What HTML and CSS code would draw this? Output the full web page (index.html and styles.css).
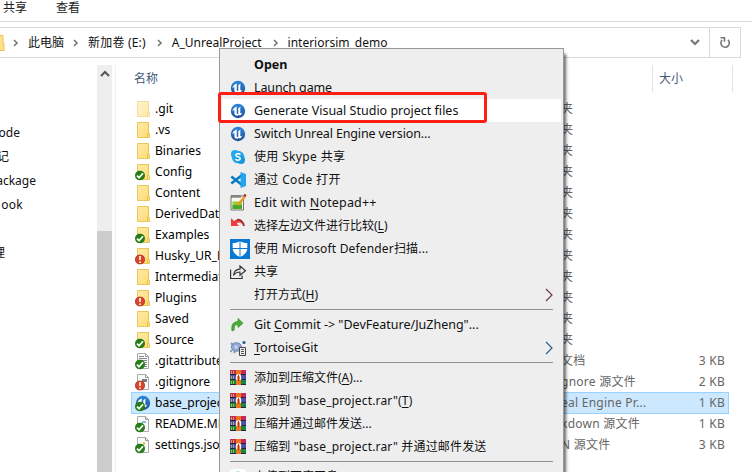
FILE: index.html
```html
<!DOCTYPE html>
<html lang="zh-CN">
<head>
<meta charset="utf-8">
<title>interiorsim_demo</title>
<link rel="stylesheet" href="styles.css">
</head>
<body>
<svg width="0" height="0" class="defs">
  <defs>
    <linearGradient id="gold" x1="0" y1="0" x2="1" y2="1"><stop offset="0" stop-color="#ffeaa8"/><stop offset="1" stop-color="#ffdc72"/></linearGradient>
    <linearGradient id="blue" x1="0" y1="0" x2="0" y2="1"><stop offset="0" stop-color="#2a86dc"/><stop offset="1" stop-color="#224f94"/></linearGradient>
    <symbol id="folder" viewBox="0 0 16 18"><path d="M2.500 1.500h11v11h1v4h-12z" fill="url(#gold)" stroke="#e9c75c"/><path d="M12.500 16v-4l1-.8v-9" fill="none" stroke="#e9c34e"/></symbol>
    <symbol id="ok" viewBox="0 0 10 10"><circle cx="5" cy="5" r="5" fill="#267d17"/><path d="M2 5.200l2 2 4-4.500" fill="none" stroke="#fff" stroke-width="1.700"/></symbol>
    <symbol id="bad" viewBox="0 0 10 10"><circle cx="5" cy="5" r="4.700" fill="#d84528" stroke="#aa2a19" stroke-width=".7"/><path d="M5 1.600v4M5 6.900v1.600" stroke="#fff" stroke-width="1.600"/></symbol>
    <symbol id="doc" viewBox="0 0 16 18"><path d="M2.500 1.500h8l3 3v12h-11z" fill="#fafafa" stroke="#aaa"/><path d="M10.500 1.500v3h3" fill="none" stroke="#999"/></symbol>
    <symbol id="lines" viewBox="0 0 16 18"><path d="M4 4.500h5M4 6.500h8M4 8.500h8M4 10.500h8M4 12.500h8M4 14.500h8" stroke="#888"/></symbol>
    <symbol id="unreal" viewBox="0 0 16 16"><circle cx="8" cy="8" r="7.200" fill="url(#blue)"/><path d="M2.300 8.400C3 5.200 4.800 3.900 7.300 3.500c-.5.500-.6.900-.6 1.500v5.200c0 .8.900.9 1.600.4V5L10.900 3.500c-.5.600-.6 1-.6 1.600v4.700c0 .8.900.7 2 0-.8 1.700-1.800 2.600-2.800 2.800l-.9-.8-1.200.9c-2 .1-3-1-3-2.500V6.900c-.7.100-1.400.600-2.100 1.500z" fill="#fff"/></symbol>
    <symbol id="winrar" viewBox="0 0 16 16"><path fill="#c82855" d="M0 0h16v5H0z"/><path fill="#4a4fae" d="M0 5h16v5H0z"/><path fill="#18863d" d="M0 10h16v5H0z"/><path d="M0 4.500h16M0 9.500h16M0 14.500h16" stroke="#27233a"/><path d="M1.500 1v3M3.500 1v3M1.500 11v3M3.500 11v3M1.500 6v3M3.500 6v3" stroke="#c9c45a" stroke-width=".8"/><path fill="#ed7625" d="M6 0h5v15H6z"/><path d="M6.500 10V7a2 2 0 0 1 4 0v3" fill="none" stroke="#fff" stroke-width="1.300"/><path d="M8.500 5v6" stroke="#b5331c"/></symbol>
  </defs>
</svg>
<div class="window">
  <div class="tabs"><span>共享</span><span>查看</span></div>
  <div class="address">
    <svg class="addrfolder" width="5" height="18" viewBox="0 0 5 18"><path d="M-5 1.500h8v8h1v7h-9z" fill="#ffe08a" stroke="#e9c34e"/></svg>
    <div class="crumbs">
      <svg class="chev" viewBox="0 0 6 8"><path d="M1 1l3 3-3 3"/></svg><span class="c1">此电脑</span>
      <svg class="chev" viewBox="0 0 6 8"><path d="M1 1l3 3-3 3"/></svg><span class="c2">新加卷 (E:)</span>
      <svg class="chev" viewBox="0 0 6 8"><path d="M1 1l3 3-3 3"/></svg><span class="c3">A_UnrealProject</span>
      <svg class="chev" viewBox="0 0 6 8"><path d="M1 1l3 3-3 3"/></svg><span class="c4">interiorsim_demo</span>
    </div>
    <svg class="drop" width="10" height="7" viewBox="0 0 10 7"><path d="M1 1l4 4 4-4"/></svg>
    <div class="refresh"><svg width="12" height="13" viewBox="0 0 12 13"><path d="M3.200 4A4.200 4.200 0 1 0 8.900 3.900M1.500 1.700h4v4"/></svg></div>
  </div>
  <div class="main">
    <div class="nav">
      <span class="n1">ode</span><span class="n2">记</span><span class="n3">ackage</span><span class="n4">ook</span><span></span><span class="n5">理</span>
    </div>
    <div class="scroll"><svg width="10" height="8" viewBox="0 0 10 8"><path d="M1 6l4-4 4 4"/></svg><div class="thumb"></div></div>
    <div class="list">
      <div class="head"><span class="hname">名称</span><span class="hsize">大小</span></div>
      <div class="row faded"><svg class="fi"><use href="#folder"/></svg><span class="nm">.git</span><span class="type">夹</span></div>
      <div class="row"><svg class="fi"><use href="#folder"/></svg><span class="nm">.vs</span><span class="type">夹</span></div>
      <div class="row"><svg class="fi"><use href="#folder"/></svg><span class="nm">Binaries</span><span class="type">夹</span></div>
      <div class="row"><svg class="fi"><use href="#folder"/><use href="#ok" x="0" y="7.500" width="10" height="10"/></svg><span class="nm">Config</span><span class="type">夹</span></div>
      <div class="row"><svg class="fi"><use href="#folder"/></svg><span class="nm">Content</span><span class="type">夹</span></div>
      <div class="row"><svg class="fi"><use href="#folder"/></svg><span class="nm">DerivedDataCache</span><span class="type">夹</span></div>
      <div class="row"><svg class="fi"><use href="#folder"/><use href="#ok" x="0" y="7.500" width="10" height="10"/></svg><span class="nm">Examples</span><span class="type">夹</span></div>
      <div class="row"><svg class="fi"><use href="#folder"/><use href="#bad" x="0" y="7.500" width="10" height="10"/></svg><span class="nm">Husky_UR_R</span><span class="type">夹</span></div>
      <div class="row"><svg class="fi"><use href="#folder"/></svg><span class="nm">Intermediate</span><span class="type">夹</span></div>
      <div class="row"><svg class="fi"><use href="#folder"/><use href="#bad" x="0" y="7.500" width="10" height="10"/></svg><span class="nm">Plugins</span><span class="type">夹</span></div>
      <div class="row"><svg class="fi"><use href="#folder"/></svg><span class="nm">Saved</span><span class="type">夹</span></div>
      <div class="row"><svg class="fi"><use href="#folder"/><use href="#ok" x="0" y="7.500" width="10" height="10"/></svg><span class="nm">Source</span><span class="type">夹</span></div>
      <div class="row"><svg class="fi"><use href="#doc"/><use href="#lines"/><use href="#ok" x="0" y="7.500" width="10" height="10"/></svg><span class="nm">.gitattributes</span><span class="type">文档</span><span class="size">3 KB</span></div>
      <div class="row"><svg class="fi"><use href="#doc"/><path d="M7 6h5v3H7z" fill="#778"/><use href="#bad" x="0" y="7.500" width="10" height="10"/></svg><span class="nm">.gitignore</span><span class="type">gnore 源文件</span><span class="size">2 KB</span></div>
      <div class="row selected"><svg class="fi"><use href="#unreal" x="0" y="1" width="16" height="16"/><use href="#ok" x="0" y="7.500" width="10" height="10"/></svg><span class="nm">base_project</span><span class="type">eal Engine Pr...</span><span class="size">1 KB</span></div>
      <div class="row"><svg class="fi"><use href="#doc"/><path d="M7 6h4v2H7z" fill="#8abbe0"/><use href="#ok" x="0" y="7.500" width="10" height="10"/></svg><span class="nm">README.MD</span><span class="type">kdown 源文件</span><span class="size">1 KB</span></div>
      <div class="row"><svg class="fi"><use href="#doc"/><path d="M8 6h2v3H8z" fill="#dfc94b"/><use href="#ok" x="0" y="7.500" width="10" height="10"/></svg><span class="nm">settings.json</span><span class="type">N 源文件</span><span class="size">3 KB</span></div>
    </div>
  </div>

  <div class="menu">
    <div class="item"><i></i><b>Open</b></div>
    <div class="item tight"><i><svg width="16" height="16"><use href="#unreal"/></svg></i><span>Launch game</span></div>
    <div class="item hover"><i><svg width="16" height="16"><use href="#unreal"/></svg></i><span>Generate Visual Studio project files</span></div>
    <div class="item tight"><i><svg width="16" height="16"><use href="#unreal"/></svg></i><span>Switch Unreal Engine version...</span></div>
    <div class="item mixed loose"><i><svg width="16" height="16" viewBox="0 0 16 16"><circle cx="8" cy="8" r="6.300" fill="#28a8ea"/><circle cx="5" cy="5" r="4" fill="#28a8ea"/><circle cx="11" cy="11" r="4" fill="#1598dc"/><path d="M10.300 5.500C9.500 4.300 5.700 4.200 5.800 6.200c.1 2 4.500 1.200 4.500 3.400 0 2-3.800 2-4.700.5" fill="none" stroke="#fff" stroke-width="1.500"/></svg></i><span>使用 Skype 共享</span></div>
    <div class="item mixed loose"><i><svg width="16" height="16" viewBox="0 0 16 16"><path d="M11.500 3.500L1.300 11.500M1.300 4.500L11.500 12.500" stroke="#087bc4" stroke-width="2.600"/><path d="M10.500 0L16 2v12l-5.500 2z" fill="#23a4ec"/></svg></i><span>通过 Code 打开</span></div>
    <div class="item wide"><i><svg width="17" height="17" viewBox="0 0 17 17"><path d="M1 2h12.500v14H1z" fill="#f8f8ee" stroke="#777"/><path d="M2.500 7.500h9.500v7.500H2.500z" fill="#91ce32"/><path d="M2.500 11h9.500v4H2.500z" fill="#48a82b"/><path d="M2 1v3M4 1v3M6 1v3M8 1v3M10 1v3" stroke="#555"/><path d="M7.500 11L15 2.500" stroke="#e99c20" stroke-width="2.500"/><path d="M14.200 2.200l1.500-1.500" stroke="#a22" stroke-width="2.500"/></svg></i><span>Edit with <u>N</u>otepad++</span></div>
    <div class="item cjk"><i><svg class="up" width="16" height="12" viewBox="0 0 16 12"><path d="M1 1v8h8L6.700 6.500c2-1.800 4.400-1.500 7.300 2.500C14 4 8.500 .5 4 4z" fill="#ef3b3b"/><path d="M7 2.800c3-.6 6 1.600 7 6.200" fill="none" stroke="#9c2d34" stroke-width="1.800"/></svg></i><span>选择左边文件进行比较(<u>L</u>)</span></div>
    <div class="item mixed"><i><svg class="def" width="20" height="20" viewBox="0 0 20 20"><path d="M0 0h20v20H0z" fill="#0878d7"/><path d="M10 2c2 1.500 4.500 2 7.300 2v5.500c0 4-3.300 7-7.300 8.500-4-1.500-7.300-4.500-7.300-8.500V4C5.500 4 8 3.500 10 2z" fill="#fff"/><path d="M10 1v18M2 9.500h16" stroke="#0878d7"/></svg></i><span>使用 Microsoft Defender扫描...</span></div>
    <div class="item cjk"><i><svg width="17" height="16" viewBox="0 0 17 16"><path d="M.6 5.500v9h11.500v-3M3.500 11.500c.4-4 2.500-6.200 6.500-6.300V2l5.500 4.700-5.500 4.500V8C7 8 5 9 3.500 11.500z" fill="none" stroke="#333" stroke-width="1.200"/></svg></i><span>共享</span></div>
    <div class="item cjk"><i></i><span>打开方式(<u>H</u>)</span><svg class="sub" viewBox="0 0 8 14"><path d="M1 1l6 6-6 6" stroke="#713b43"/></svg></div>
    <hr>
    <div class="item"><i><svg width="16" height="16" viewBox="0 0 16 16"><path d="M2 14C1 7 3.500 4.500 8 4.700V1.500l5 4.700-5 4.300V7.600C5 7.600 4 9 4.300 13z" fill="#49ae35" stroke="#338b29" stroke-width=".7"/></svg></i><span>Git <u>C</u>ommit -&gt; "DevFeature/JuZheng"...</span></div>
    <div class="item"><i><svg width="16" height="16" viewBox="0 0 16 16"><path d="M1 3l3 3M2 10l-1.500 2M5 11l-1 2" stroke="#8599bd" stroke-width="2"/><ellipse cx="6.500" cy="7" rx="5" ry="4.300" fill="#94acd6" stroke="#6c86ad"/><path d="M4 7l2-2 2 2-2 2z" fill="#c6d7ee"/><circle cx="14" cy="2.500" r="1.600" fill="#14608f"/><path d="M9.500 7.500h6v8h-6z" fill="#eee" stroke="#444"/><path d="M11 9.500h3M11 11.500h3M11 13.500h3" stroke="#555"/></svg></i><span><u>T</u>ortoiseGit</span><svg class="sub" viewBox="0 0 8 14"><path d="M1 1l6 6-6 6" stroke="#2d5d8c"/></svg></div>
    <hr>
    <div class="item cjk"><i><svg width="16" height="16"><use href="#winrar"/></svg></i><span>添加到压缩文件(<u>A</u>)...</span></div>
    <div class="item mixed"><i><svg width="16" height="16"><use href="#winrar"/></svg></i><span>添加到 "base_project.rar"(<u>T</u>)</span></div>
    <div class="item cjk"><i><svg width="16" height="16"><use href="#winrar"/></svg></i><span>压缩并通过邮件发送...</span></div>
    <div class="item mixed"><i><svg width="16" height="16"><use href="#winrar"/></svg></i><span>压缩到 "base_project.rar" 并通过邮件发送</span></div>
    <hr>
    <div class="item cjk"><i><svg width="16" height="16" viewBox="0 0 16 16"><rect width="16" height="16" rx="4" fill="#fff"/><circle cx="8" cy="6" r="3.500" fill="#38b6e6"/></svg></i><span>上传到百度网盘</span></div>
  </div>
  <div class="mark"></div>
</div>
</body>
</html>
```
FILE: styles.css
```css
* { box-sizing: border-box; }
body { margin: 0; background: #fff; font: 12px/20px "Noto Sans", "Noto Sans CJK SC", sans-serif; color: #111; }
.defs { position: absolute; }
.window { position: relative; width: 752px; height: 472px; overflow: hidden; display: flex; flex-direction: column; }
svg { display: block; flex: none; }
span, b { white-space: pre; }
.tabs { height: 22px; border-bottom: 1px solid #d9d9d9; padding: 0 0 0 3px; display: flex; gap: 29px; line-height: 15px; flex: none; color: #222; }
.address { height: 31px; margin: 5px 11px 0 0; border: 1px solid #d9d9d9; border-left: 0; display: flex; align-items: center; flex: none; }
.crumbs { display: flex; align-items: center; flex: 1; margin-left: 8px; }
.crumbs span { margin: 0 9px; }
.crumbs .c2 { letter-spacing: .2px; margin-right: 11px; }
.crumbs .c3 { margin-right: 11px; }
.crumbs .c4 { margin-left: 9px; }
.chev { width: 6px; height: 8px; }
.chev path, .drop path, .refresh path, .scroll path { fill: none; stroke: #777; stroke-width: 1.6; }
.drop { margin-right: 9px; }
.drop path { stroke-width: 2.2; }
.refresh { width: 31px; height: 29px; border-left: 1px solid #d9d9d9; display: grid; place-items: center; }
.main { display: flex; flex: 1; padding-top: 7px; }
.nav { width: 97px; padding-top: 56px; }
.nav span { display: flex; justify-content: flex-end; height: 24px; line-height: 24px; overflow: hidden; }
.nav .n1 { width: 20px; }
.nav .n2 { width: 9px; }
.nav .n3 { width: 36px; }
.nav .n4 { width: 23px; letter-spacing: .3px; }
.nav .n5 { width: 5px; }
.scroll { width: 15px; background: #eee; display: flex; flex-direction: column; align-items: center; padding-top: 5px; }
.scroll path { stroke: #555; stroke-width: 2; }
.thumb { width: 15px; flex: 1; margin-top: 153px; background: #cdcdcd; }
.list { flex: 1; margin-left: 3px; border-left: 1px solid #f0f0f0; padding-left: 15px; }
.head { height: 27px; display: flex; line-height: 27px; color: #44597a; }
.hname { width: 522px; padding-left: 3px; border-right: 1px solid #e2e2e2; }
.hsize { width: 80px; padding-left: 6px; border-right: 1px solid #e2e2e2; }
.head + .row { margin-top: 6px; }
.row { height: 21px; width: 598px; display: flex; align-items: center; padding-left: 4px; }
.row.selected { height: 22px; margin: 0 0 -1px; background: #cce8ff; box-shadow: inset 0 0 0 1px #99d1ff; }
.fi { width: 16px; height: 18px; }
.faded .fi { opacity: .6; }
.nm { width: 406px; margin-left: 4px; font-size: 12.1px; overflow: hidden; color: #000; }
.type { width: 110px; color: #666; letter-spacing: .25px; }
.size { flex: 1; text-align: right; padding-right: 4px; color: #666; letter-spacing: .25px; }
.menu { position: absolute; left: 219px; top: 48px; width: 345px; height: 440px; background: #eee; border: 1px solid #999; padding: 4px 2px; box-shadow: 3px 5px 3px -1px rgba(0,0,0,.6); }
.item { height: 23px; display: flex; align-items: center; font-size: 12.5px; }
.item.tight { letter-spacing: -.13px; }
.item.wide { letter-spacing: .16px; }
.item.cjk { font-size: 12px; }
.item.mixed { font-size: 12px; letter-spacing: .17px; }
.item.loose { letter-spacing: .35px; }
.item.hover { background: #fff; }
.item i { width: 20px; margin: 0 4px 0 8px; height: 23px; display: flex; align-items: center; }
.item .up { margin-bottom: 6px; }
.item u { text-underline-offset: 2px; }
.sub { width: 8px; height: 14px; margin: 0 8px 0 auto; }
.sub path { fill: none; stroke-width: 1.2; }
.menu hr { margin: 3px 8px; border: 0; height: 1px; background: #919191; }
.mark { position: absolute; left: 218px; top: 92px; width: 269px; height: 31px; border: 3px solid #ff1e14; border-radius: 3px; }
```
